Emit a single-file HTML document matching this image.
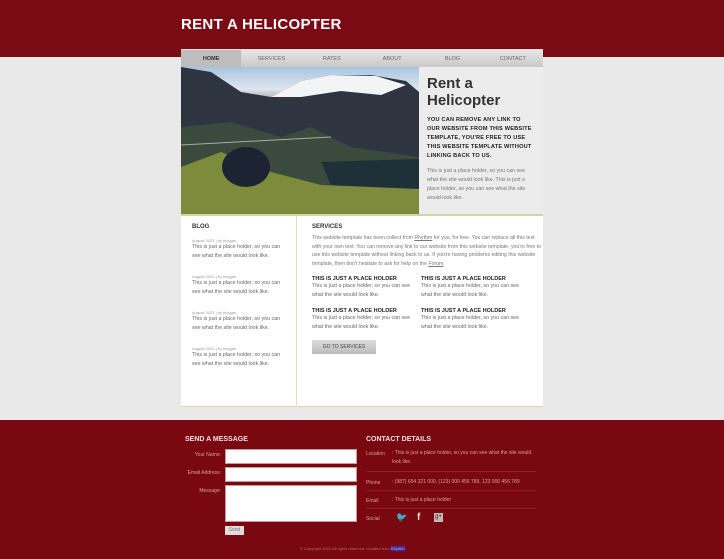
<!DOCTYPE html>
<html><head><meta charset="utf-8"><style>
*{margin:0;padding:0;box-sizing:border-box}
body{width:724px;height:559px;overflow:hidden;font-family:"Liberation Sans",sans-serif;background:#e6e6e6;position:relative}
.top{position:absolute;left:0;top:0;width:724px;height:57px;background:#7a0a14}
.logo{position:absolute;left:181px;top:16px;color:#fff;font-weight:bold;font-size:15px;letter-spacing:0.3px}
.mid{position:absolute;left:0;top:57px;width:724px;height:363px;background:#e9e9e9}
.nav{position:absolute;left:181px;top:49px;width:362px;height:18px;background:linear-gradient(#e6e6e6,#c9c9c9);display:flex;border-top:1px solid #ddd}
.nav div{flex:1;font-size:5.5px;color:#666;text-align:center;line-height:18px}
.nav div:first-child{background:#bdbdbd;color:#333;font-weight:bold}
.hero{position:absolute;left:181px;top:67px;width:238px;height:147px;background:linear-gradient(180deg,#a8c4e0 0%,#dfe6ee 15%,#3c4350 35%)}
.side{position:absolute;left:419px;top:67px;width:124px;height:147px;background:#ececec;padding:8px}
.side h1{font-size:15px;color:#333;line-height:17px}
.side h3{font-size:5.6px;color:#222;font-weight:bold;line-height:9px;margin-top:7px;letter-spacing:0.2px}
.side p{font-size:5.3px;color:#777;line-height:9px;margin-top:6px}
.content{position:absolute;left:181px;top:214px;width:362px;height:193px;background:#fff;border-top:2px solid #d8d2a8;border-bottom:1px solid #ddd8b0}
.blog{position:absolute;left:0;top:0;width:116px;height:191px;border-right:1px solid #e3dfb8;padding:8px 11px}
h4{font-size:6px;color:#333;font-weight:bold}
.d{font-size:4px;color:#999;margin-top:14px}
.d:first-of-type{margin-top:8px}
.t{font-size:5.3px;color:#666;line-height:8.5px}
.serv{position:absolute;left:131px;top:0;width:230px;padding-top:8px}
.serv p{font-size:5.2px;color:#777;line-height:8.5px;margin-top:4px}
.g{display:grid;grid-template-columns:109px 109px;margin-top:8px;row-gap:9px}
.g h5{font-size:5.5px;color:#222;font-weight:bold}
.btn{margin-top:9px;width:64px;height:14px;background:linear-gradient(#ddd,#bbb);font-size:5px;color:#444;text-align:center;line-height:14px}
.foot{position:absolute;left:0;top:420px;width:724px;height:139px;background:#7a0810;color:#e0b0b0}
.fh{position:absolute;font-size:7px;font-weight:bold;color:#f0e0e0;top:436px}
.lab{position:absolute;font-size:5px;color:#d8a0a0;text-align:right;width:45px;left:176px}
.in{position:absolute;left:225px;width:132px;background:#fff;border:1px solid #c99}
.cd{position:absolute;left:366px;font-size:5px;color:#d8a0a0}
.cv{position:absolute;left:392px;font-size:5px;color:#d8a0a0;line-height:9px;width:140px}
.hr{position:absolute;left:366px;width:170px;height:1px;background:#8e2028}
</style></head><body>
<div class="top"></div><div class="mid"></div>
<div class="logo">RENT A HELICOPTER</div>
<div class="nav"><div>HOME</div><div>SERVICES</div><div>RATES</div><div>ABOUT</div><div>BLOG</div><div>CONTACT</div></div>
<div class="hero"><svg width="238" height="147"><polygon points="0,0 30,5 60,25 90,30 120,14 150,8 190,8 225,14 238,25 238,100 0,100" fill="#2e3440"/><polygon points="90,30 120,14 150,8 195,9 225,18 200,28 160,24 120,30" fill="#f2f4f6"/><polygon points="0,60 50,55 100,70 130,60 170,80 238,90 238,120 0,120" fill="#3a4a3c"/><polygon points="140,95 238,92 238,122 150,118" fill="#1e3038"/><polygon points="0,100 40,85 90,105 140,118 238,122 238,147 0,147" fill="#7e8b3a"/><ellipse cx="65" cy="100" rx="24" ry="20" fill="#1c2434"/><line x1="0" y1="78" x2="150" y2="70" stroke="#aaa" stroke-width="1"/></svg></div>
<div class="side"><h1>Rent a<br>Helicopter</h1><h3>YOU CAN REMOVE ANY LINK TO OUR WEBSITE FROM THIS WEBSITE TEMPLATE, YOU'RE FREE TO USE THIS WEBSITE TEMPLATE WITHOUT LINKING BACK TO US.</h3><p>This is just a place holder, so you can see what the site would look like. This is just a place holder, so you can see what the site would look like.</p></div>
<div class="content">
<div class="blog"><h4>BLOG</h4>
<div class="d">August 2023 | by blogger</div><div class="t">This is just a place holder, so you can see what the site would look like.</div>
<div class="d">August 2023 | by blogger</div><div class="t">This is just a place holder, so you can see what the site would look like.</div>
<div class="d">August 2023 | by blogger</div><div class="t">This is just a place holder, so you can see what the site would look like.</div>
<div class="d">August 2023 | by blogger</div><div class="t">This is just a place holder, so you can see what the site would look like.</div>
</div>
<div class="serv"><h4>SERVICES</h4><p>This website template has been collect from <u>Rhythm</u> for you, for free. You can replace all this text with your own text. You can remove any link to our website from this website template, you're free to use this website template without linking back to us. If you're having problems editing this website template, then don't hesitate to ask for help on the <u>Forum</u>.</p>
<div class="g"><div><h5>THIS IS JUST A PLACE HOLDER</h5><div class="t">This is just a place holder, so you can see what the site would look like.</div></div><div><h5>THIS IS JUST A PLACE HOLDER</h5><div class="t">This is just a place holder, so you can see what the site would look like.</div></div><div><h5>THIS IS JUST A PLACE HOLDER</h5><div class="t">This is just a place holder, so you can see what the site would look like.</div></div><div><h5>THIS IS JUST A PLACE HOLDER</h5><div class="t">This is just a place holder, so you can see what the site would look like.</div></div></div>
<div class="btn">GO TO SERVICES</div></div>
</div>
<div class="foot"></div>
<div class="fh" style="left:185px">SEND A MESSAGE</div>
<div class="fh" style="left:366px">CONTACT DETAILS</div>
<div class="lab" style="top:452px">Your Name:</div><div class="in" style="top:449px;height:15px"></div>
<div class="lab" style="top:470px">Email Address:</div><div class="in" style="top:467px;height:15px"></div>
<div class="lab" style="top:488px">Message:</div><div class="in" style="top:485px;height:37px"></div>
<div style="position:absolute;left:225px;top:526px;width:19px;height:9px;background:#ddd;font-size:5px;color:#777;text-align:center;line-height:9px">Send</div>
<div class="cd" style="top:451px">Location</div><div class="cv" style="top:449px">: This is just a place holder, so you can see what the site would look like.</div>
<div class="hr" style="top:471px"></div>
<div class="cd" style="top:480px">Phone</div><div class="cv" style="top:478px">: (987) 654 321 000, (123) 000 456 789, 123 000 456 789</div>
<div class="hr" style="top:490px"></div>
<div class="cd" style="top:498px">Email</div><div class="cv" style="top:496px">: This is just a place holder</div>
<div class="hr" style="top:508px"></div>
<div class="cd" style="top:516px">Social</div>
<div style="position:absolute;left:396px;top:512px;font-size:9px;color:#ccc;font-weight:bold">🐦</div>
<div style="position:absolute;left:417px;top:512px;font-size:10px;color:#ddd;font-weight:bold">f</div>
<div style="position:absolute;left:434px;top:513px;width:9px;height:9px;background:#bbb;font-size:6px;color:#7a0810;text-align:center;line-height:9px">g+</div>
<div style="position:absolute;left:300px;top:546px;font-size:4px;color:#b07070">© Copyright 2023 All rights reserved. Created from <span style="background:#4030a0;color:#b0a0ff">Rhythm</span></div>
</body></html>
